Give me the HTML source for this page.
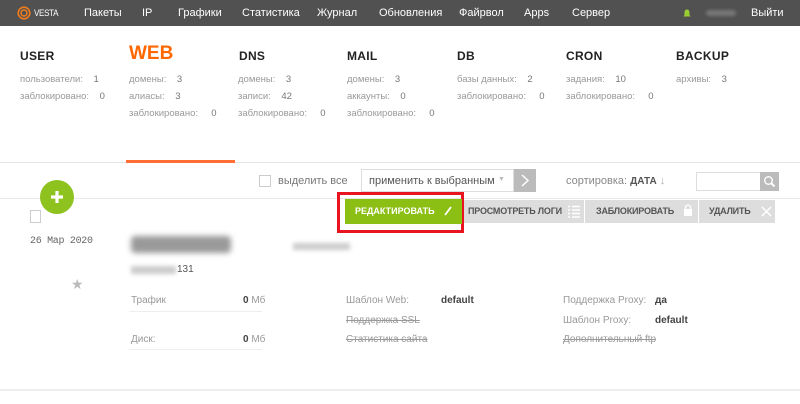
<!DOCTYPE html>
<html><head><meta charset="utf-8"><style>
*{margin:0;padding:0;box-sizing:border-box}
body{width:800px;height:404px;background:#fff;font-family:"Liberation Sans",sans-serif;position:relative;overflow:hidden;color:#555}
.a{position:absolute;white-space:nowrap}
.top{position:absolute;left:0;top:0;width:800px;height:26px;background:#515151}
.nav{color:#fff;font-size:11px;top:7px}
.h{font-weight:bold;font-size:12px;color:#222;top:49px;letter-spacing:.3px}
.s{font-size:9.5px;color:#999}
.s b{font-weight:normal;color:#777}
.gb{position:absolute;top:200px;height:23px;background:#ddd;color:#555;font-size:9px;font-weight:bold;line-height:23px;letter-spacing:-.2px}
.d{font-size:10px;color:#999}
.st{text-decoration:line-through}
.v{font-size:10px;color:#444;font-weight:bold}
</style></head><body>
<div class="top"></div>
<svg class="a" style="left:17px;top:6px" width="14" height="14"><circle cx="7" cy="7" r="5.8" fill="none" stroke="#f07c1c" stroke-width="1.6"/><circle cx="7" cy="7" r="3" fill="none" stroke="#f07c1c" stroke-width="1.5"/></svg>
<div class="a nav" style="left:34px;top:8px;font-size:9px;letter-spacing:-.4px;transform:scaleX(.9);transform-origin:left">VESTA</div>
<div class="a nav" style="left:84px">Пакеты</div>
<div class="a nav" style="left:142px">IP</div>
<div class="a nav" style="left:178px">Графики</div>
<div class="a nav" style="left:242px">Статистика</div>
<div class="a nav" style="left:317px">Журнал</div>
<div class="a nav" style="left:379px">Обновления</div>
<div class="a nav" style="left:459px">Файрвол</div>
<div class="a nav" style="left:524px">Apps</div>
<div class="a nav" style="left:572px">Сервер</div>
<svg class="a" style="left:683px;top:9px" width="8" height="9"><path d="M4 0.5C2 0.5 1.5 2 1.5 4L1.5 6 0.5 7.5 7.5 7.5 6.5 6 6.5 4C6.5 2 6 0.5 4 0.5Z" fill="#9c3"/></svg>
<div class="a" style="left:706px;top:10px;width:30px;height:6px;background:#777;border-radius:3px;filter:blur(1.5px)"></div>
<div class="a nav" style="left:751px">Выйти</div>

<div class="a h" style="left:20px">USER</div>
<div class="a" style="left:129px;top:43px;font-size:19px;font-weight:bold;color:#ff6701">WEB</div>
<div class="a h" style="left:239px">DNS</div>
<div class="a h" style="left:347px">MAIL</div>
<div class="a h" style="left:457px">DB</div>
<div class="a h" style="left:566px">CRON</div>
<div class="a h" style="left:676px">BACKUP</div>

<div class="a s" style="left:20px;top:74px">пользователи:&nbsp;&nbsp;&nbsp; <b>1</b></div>
<div class="a s" style="left:20px;top:91px">заблокировано:&nbsp;&nbsp;&nbsp; <b>0</b></div>
<div class="a s" style="left:129px;top:74px">домены:&nbsp;&nbsp;&nbsp; <b>3</b></div>
<div class="a s" style="left:129px;top:91px">алиасы:&nbsp;&nbsp;&nbsp; <b>3</b></div>
<div class="a s" style="left:129px;top:108px">заблокировано:&nbsp;&nbsp;&nbsp;&nbsp; <b>0</b></div>
<div class="a s" style="left:238px;top:74px">домены:&nbsp;&nbsp;&nbsp; <b>3</b></div>
<div class="a s" style="left:238px;top:91px">записи:&nbsp;&nbsp;&nbsp; <b>42</b></div>
<div class="a s" style="left:238px;top:108px">заблокировано:&nbsp;&nbsp;&nbsp;&nbsp; <b>0</b></div>
<div class="a s" style="left:347px;top:74px">домены:&nbsp;&nbsp;&nbsp; <b>3</b></div>
<div class="a s" style="left:347px;top:91px">аккаунты:&nbsp;&nbsp;&nbsp; <b>0</b></div>
<div class="a s" style="left:347px;top:108px">заблокировано:&nbsp;&nbsp;&nbsp;&nbsp; <b>0</b></div>
<div class="a s" style="left:457px;top:74px">базы данных:&nbsp;&nbsp;&nbsp; <b>2</b></div>
<div class="a s" style="left:457px;top:91px">заблокировано:&nbsp;&nbsp;&nbsp;&nbsp; <b>0</b></div>
<div class="a s" style="left:566px;top:74px">задания:&nbsp;&nbsp;&nbsp; <b>10</b></div>
<div class="a s" style="left:566px;top:91px">заблокировано:&nbsp;&nbsp;&nbsp;&nbsp; <b>0</b></div>
<div class="a s" style="left:676px;top:74px">архивы:&nbsp;&nbsp;&nbsp; <b>3</b></div>

<div class="a" style="left:0;top:162px;width:800px;height:1px;background:#e6e6e6"></div>
<div class="a" style="left:126px;top:160px;width:109px;height:3px;background:#ff6e35"></div>

<div class="a" style="left:259px;top:175px;width:12px;height:12px;border:1px solid #ccc"></div>
<div class="a" style="left:278px;top:175px;font-size:11px;color:#777">выделить все</div>
<div class="a" style="left:361px;top:169px;width:153px;height:23px;border:1px solid #ddd"></div>
<div class="a" style="left:369px;top:175px;font-size:11px;color:#555">применить к выбранным</div>
<div class="a" style="left:498px;top:176px;font-size:7px;color:#bbb">▼</div>
<div class="a" style="left:514px;top:169px;width:22px;height:23px;background:#bbb"></div>
<svg class="a" style="left:519px;top:173px" width="12" height="15"><path d="M3 2 L9 7.5 L3 13" fill="none" stroke="#fff" stroke-width="1.5"/></svg>
<div class="a" style="left:566px;top:175px;font-size:11px;color:#888">сортировка: <span style="color:#555;font-weight:bold;font-size:10px">ДАТА</span> <span style="color:#aaa">↓</span></div>
<div class="a" style="left:696px;top:172px;width:65px;height:19px;border:1px solid #ddd"></div>
<div class="a" style="left:760px;top:172px;width:19px;height:19px;background:#bbb"></div>
<svg class="a" style="left:763px;top:175px" width="13" height="13"><circle cx="5.5" cy="5.5" r="3.8" fill="none" stroke="#fff" stroke-width="1.4"/><path d="M8.3 8.3 L11.5 11.5" stroke="#fff" stroke-width="2"/></svg>

<div class="a" style="left:0;top:198px;width:800px;height:1px;background:#e8e8e8"></div>
<div class="a" style="left:40px;top:180px;width:34px;height:34px;border-radius:50%;background:#8dc21f"></div>
<svg class="a" style="left:40px;top:180px" width="34" height="34"><path d="M17 11V23M11 17H23" stroke="#fff" stroke-width="3.2"/></svg>

<div class="a" style="left:337px;top:192px;width:127px;height:41px;border:3px solid #e8141f"></div>
<div class="a" style="left:345px;top:199px;width:117px;height:25px;background:#8cbf14"></div>
<div class="a" style="left:355px;top:206px;color:#fff;font-size:9px;font-weight:bold">РЕДАКТИРОВАТЬ</div>
<svg class="a" style="left:443px;top:205px" width="10" height="12"><path d="M2 10 L8 2" stroke="#fff" stroke-width="1.8"/></svg>
<div class="gb" style="left:464px;width:120px;padding-left:4px">ПРОСМОТРЕТЬ ЛОГИ</div>
<svg class="a" style="left:568px;top:205px" width="12" height="13"><path d="M0 1.5h2M4 1.5h8M0 5h2M4 5h8M0 8.5h2M4 8.5h8M0 12h2M4 12h8" stroke="#fff" stroke-width="1.6"/></svg>
<div class="gb" style="left:585px;width:113px;padding-left:11px">ЗАБЛОКИРОВАТЬ</div>
<svg class="a" style="left:683px;top:204px" width="10" height="13"><rect x="1" y="5" width="8" height="7" fill="#fff"/><path d="M2.5 5V3.5a2.5 2.5 0 0 1 5 0V5" fill="none" stroke="#fff" stroke-width="1.3"/></svg>
<div class="gb" style="left:699px;width:76px;padding-left:10px">УДАЛИТЬ</div>
<svg class="a" style="left:761px;top:206px" width="11" height="11"><path d="M1 1L10 10M10 1L1 10" stroke="#fff" stroke-width="1.5"/></svg>

<div class="a" style="left:30px;top:210px;width:11px;height:13px;border:1px solid #ccc"></div>
<div class="a" style="left:30px;top:236px;font-size:10px;color:#666;font-family:'Liberation Mono',monospace;letter-spacing:-.3px">26 Мар 2020</div>
<div class="a" style="left:131px;top:236px;width:100px;height:17px;background:#999;filter:blur(3px);border-radius:4px"></div>
<div class="a" style="left:293px;top:243px;width:57px;height:7px;background:#ccc;filter:blur(2px)"></div>
<div class="a" style="left:131px;top:266px;width:45px;height:8px;background:#ccc;filter:blur(2px)"></div>
<div class="a" style="left:177px;top:264px;font-size:10px;color:#555">131</div>
<div class="a" style="left:71px;top:276px;font-size:14px;color:#bbb">★</div>

<div class="a d" style="left:131px;top:295px">Трафик</div>
<div class="a d" style="left:243px;top:295px"><b style="color:#444">0</b> Мб</div>
<div class="a" style="left:129px;top:311px;width:133px;height:1px;background:#eee"></div>
<div class="a d" style="left:131px;top:334px">Диск:</div>
<div class="a d" style="left:243px;top:334px"><b style="color:#444">0</b> Мб</div>
<div class="a" style="left:129px;top:349px;width:133px;height:1px;background:#eee"></div>

<div class="a d" style="left:346px;top:295px">Шаблон Web:</div>
<div class="a v" style="left:441px;top:295px">default</div>
<div class="a d st" style="left:346px;top:315px">Поддержка SSL</div>
<div class="a d st" style="left:346px;top:334px">Статистика сайта</div>

<div class="a d" style="left:563px;top:295px">Поддержка Proxy:</div>
<div class="a v" style="left:655px;top:295px">да</div>
<div class="a d" style="left:563px;top:315px">Шаблон Proxy:</div>
<div class="a v" style="left:655px;top:315px">default</div>
<div class="a d st" style="left:563px;top:334px">Дополнительный ftp</div>

<div class="a" style="left:0;top:389px;width:800px;height:2px;background:#eee"></div>
</body></html>
